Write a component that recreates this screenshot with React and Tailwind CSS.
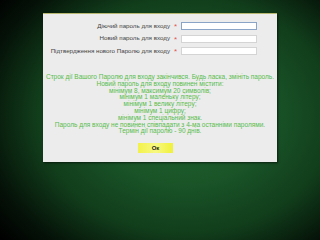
export default function App() {
  const rows = [
    "Діючий пароль для входу",
    "Новий пароль для входу",
    "Підтвердження нового Паролю для входу",
  ];
  const lines = [
    "Строк дії Вашого Паролю для входу закінчився. Будь ласка, змініть пароль.",
    "Новий пароль для входу повинен містити:",
    "мінімум 8, максимум 20 символів;",
    "мінімум 1 маленьку літеру;",
    "мінімум 1 велику літеру;",
    "мінімум 1 цифру;",
    "мінімум 1 спеціальний знак.",
    "Пароль для входу не повинен співпадати з 4-ма останніми паролями.",
    "Термін дії паролю - 90 днів.",
  ];
  return (
    <div className="w-[320px] h-[240px] overflow-hidden bg-[radial-gradient(ellipse_75%_80%_at_58%_48%,#1f6330_0%,#1a5528_35%,#113d1b_62%,#051208_85%,#000_100%)] pt-[13px] pl-[43px] font-['Liberation_Sans',sans-serif]">
      <div className="w-[234px] h-[149px] bg-[#ececec] border-t border-[#b8b870] shadow-[1px_1px_2px_rgba(0,0,0,0.6)] flex flex-col">
        <div className="flex flex-col gap-[4.5px] pt-[8px]">
          {rows.map((r, i) => (
            <div key={i} className="flex items-center h-[8px]">
              <div className="w-[127px] text-right text-[6.2px] leading-none text-[#444] whitespace-nowrap">{r}</div>
              <div className="w-[11px] text-center text-[8px] leading-none text-[#e05555] pt-[2px]">*</div>
              <div className={`w-[76px] h-[8px] bg-white border ${i === 0 ? "border-[#8aa4c8]" : "border-[#d4d4d4]"}`} />
            </div>
          ))}
        </div>
        <div className="mt-[19px] flex flex-col items-center text-[6.5px] leading-[6.8px] text-[#58bc4c] whitespace-nowrap">
          {lines.map((l, i) => (
            <div key={i}>{l}</div>
          ))}
        </div>
        <div className="mt-[8px] pl-[95px]">
          <div className="w-[35px] h-[10px] flex items-center justify-center bg-[linear-gradient(90deg,#f2f24a,#f8f880_50%,#f0f03a)] text-[6px] font-bold text-[#222] leading-none">Ок</div>
        </div>
      </div>
    </div>
  );
}
